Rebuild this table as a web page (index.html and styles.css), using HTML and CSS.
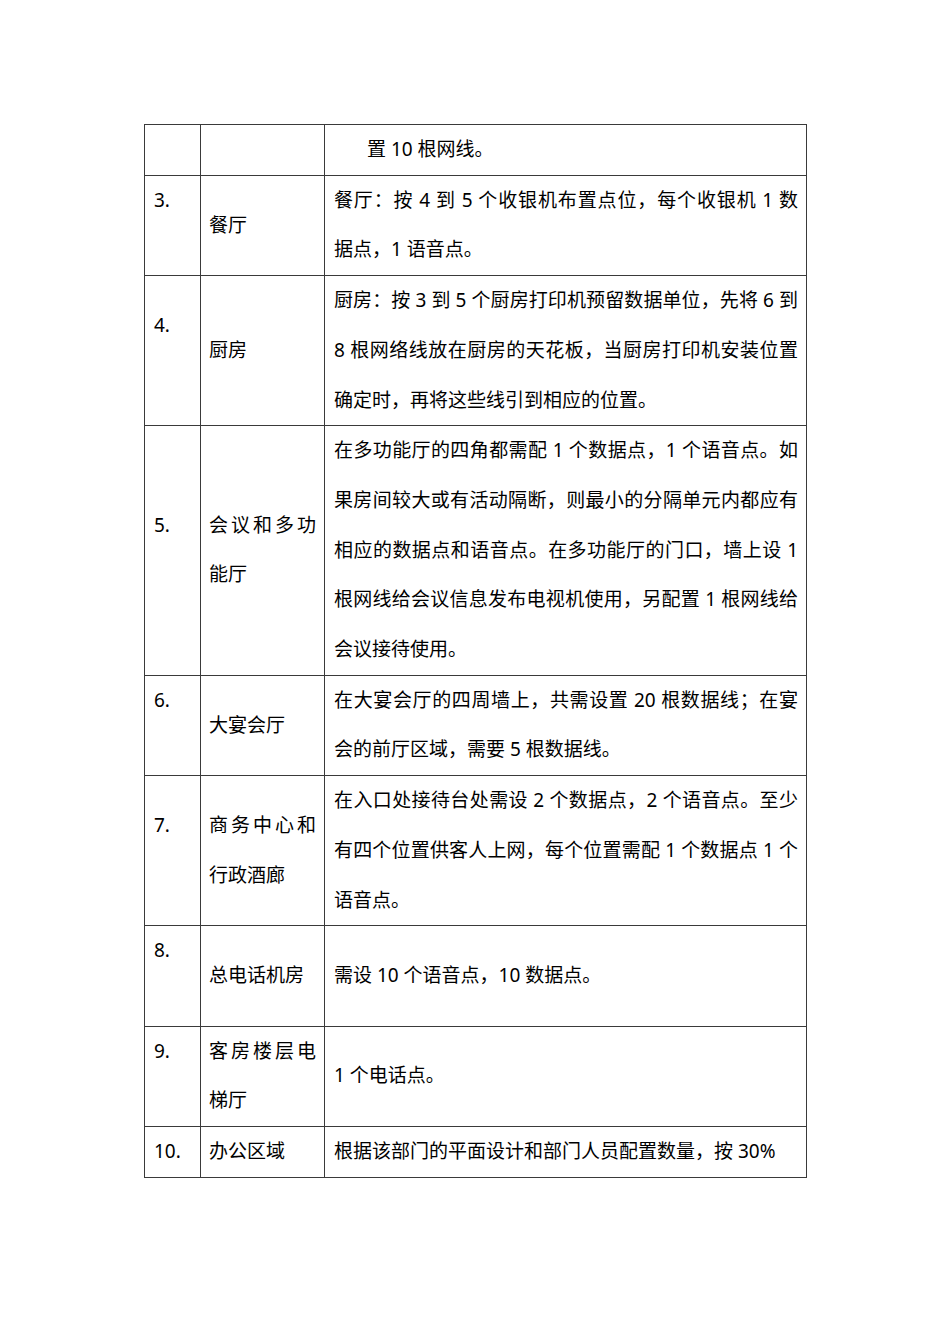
FILE: index.html
```html
<!DOCTYPE html>
<html lang="zh-CN">
<head>
<meta charset="utf-8">
<title>表格</title>
<link rel="stylesheet" href="styles.css">
</head>
<body>
<div class="page">
<table class="spec">
<colgroup><col class="c1"><col class="c2"><col class="c3"></colgroup>
<tr>
<td class="num"></td>
<td class="name"></td>
<td class="desc"><span class="indent">置 10 根网线。</span></td>
</tr>
<tr>
<td class="num">3.</td>
<td class="name">餐厅</td>
<td class="desc"><span class="j">餐厅：按 4 到 5 个收银机布置点位，每个收银机 1 数</span><span class="l">据点，1 语音点。</span></td>
</tr>
<tr>
<td class="num">4.</td>
<td class="name">厨房</td>
<td class="desc"><span class="j">厨房：按 3 到 5 个厨房打印机预留数据单位，先将 6 到</span><span class="j">8 根网络线放在厨房的天花板，当厨房打印机安装位置</span><span class="l">确定时，再将这些线引到相应的位置。</span></td>
</tr>
<tr>
<td class="num">5.</td>
<td class="name"><span class="j">会议和多功</span><span class="l">能厅</span></td>
<td class="desc"><span class="j">在多功能厅的四角都需配 1 个数据点，1 个语音点。如</span><span class="j">果房间较大或有活动隔断，则最小的分隔单元内都应有</span><span class="j">相应的数据点和语音点。在多功能厅的门口，墙上设 1</span><span class="j">根网线给会议信息发布电视机使用，另配置 1 根网线给</span><span class="l">会议接待使用。</span></td>
</tr>
<tr>
<td class="num">6.</td>
<td class="name">大宴会厅</td>
<td class="desc"><span class="j">在大宴会厅的四周墙上，共需设置 20 根数据线；在宴</span><span class="l">会的前厅区域，需要 5 根数据线。</span></td>
</tr>
<tr>
<td class="num">7.</td>
<td class="name"><span class="j">商务中心和</span><span class="l">行政酒廊</span></td>
<td class="desc"><span class="j">在入口处接待台处需设 2 个数据点，2 个语音点。至少</span><span class="j">有四个位置供客人上网，每个位置需配 1 个数据点 1 个</span><span class="l">语音点。</span></td>
</tr>
<tr>
<td class="num">8.</td>
<td class="name">总电话机房</td>
<td class="desc">需设 10 个语音点，10 数据点。</td>
</tr>
<tr>
<td class="num">9.</td>
<td class="name"><span class="j">客房楼层电</span><span class="l">梯厅</span></td>
<td class="desc">1 个电话点。</td>
</tr>
<tr class="last">
<td class="num">10.</td>
<td class="name">办公区域</td>
<td class="desc"><span class="l">根据该部门的平面设计和部门人员配置数量，按 30%</span></td>
</tr>
</table>
</div>
</body>
</html>
```

FILE: styles.css
```css
html, body {
  margin: 0;
  padding: 0;
  background: #ffffff;
}

body {
  font-family: "Noto Sans", "Noto Sans CJK SC", sans-serif;
  font-size: 19px;
  color: #000000;
}

.page {
  padding: 124px 0 0 144px;
}

.spec {
  border-collapse: collapse;
  table-layout: fixed;
  width: 662px;
}

.c1 { width: 56px; }
.c2 { width: 124px; }
.c3 { width: 482px; }

.spec td {
  border: 1px solid #3a3a3a;
  line-height: 49.7px;
  padding: 0;
  vertical-align: middle;
}

.num {
  padding-left: 9px !important;
  padding-bottom: 49.7px !important;
}

.spec tr:first-child .num,
.spec tr.last .num {
  padding-bottom: 0 !important;
}

.name {
  padding-left: 8px !important;
  padding-right: 8px !important;
}

.desc {
  padding-left: 9px !important;
  padding-right: 8px !important;
}

.j {
  display: block;
  white-space: nowrap;
  text-align: justify;
  text-align-last: justify;
}

.l {
  display: block;
  white-space: nowrap;
}

.indent {
  display: block;
  padding-left: 33px;
}
```
